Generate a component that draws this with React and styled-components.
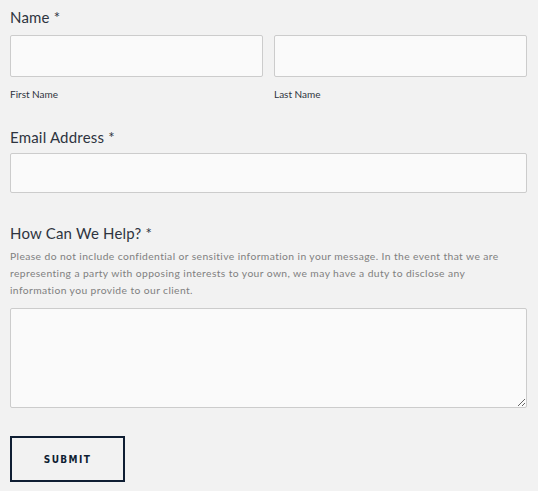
import styled, { createGlobalStyle } from 'styled-components';

const GlobalStyle = createGlobalStyle`
  html, body {
    margin: 0;
    background: #f2f2f2;
  }
  body {
    font-family: Lato, "Noto Sans", sans-serif;
  }
`;

const Form = styled.form`
  display: flex;
  flex-direction: column;
  padding: 7px 11px 0 10px;
`;

const Field = styled.div`
  display: flex;
  flex-direction: column;
  margin-bottom: ${(p) => p.$gap || '0px'};
`;

const Legend = styled.label`
  font-size: 15px;
  color: #2e3440;
  line-height: 20px;
  margin-bottom: ${(p) => p.$mb || '8px'};
  letter-spacing: 0.2px;
`;

const Row = styled.div`
  display: grid;
  grid-template-columns: 1fr 1fr;
  gap: 11px;
`;

const Sub = styled.div`
  display: flex;
  flex-direction: column;
`;

const Input = styled.input`
  box-sizing: border-box;
  width: 100%;
  height: ${(p) => p.$h || '42px'};
  background: #fafafa;
  border: 1px solid #cccccc;
  border-radius: 2px;
  font: inherit;
  outline: none;
`;

const SubLabel = styled.span`
  font-size: 10px;
  color: #2e3440;
  margin-top: 10px;
  line-height: 14px;
`;

const Help = styled.p`
  margin: 0 0 9px;
  max-width: 500px;
  font-size: 10.3px;
  line-height: 17px;
  color: #808080;
  letter-spacing: 0.4px;
`;

const TextArea = styled.textarea`
  box-sizing: border-box;
  width: 100%;
  height: 100px;
  background: #fafafa;
  border: 1px solid #cccccc;
  border-radius: 2px;
  font: inherit;
  display: block;
  outline: none;
`;

const Submit = styled.button`
  align-self: flex-start;
  width: 115px;
  height: 46px;
  background: transparent;
  border: 2px solid #0f1e33;
  color: #0f1e33;
  font-family: "DejaVu Sans Condensed", "DejaVu Sans", sans-serif;
  font-weight: bold;
  font-size: 10px;
  letter-spacing: 1.4px;
  cursor: pointer;
`;

export default function App() {
  return (
    <>
      <GlobalStyle />
      <Form onSubmit={(e) => e.preventDefault()}>
        <Field $gap="26px">
          <Legend>Name *</Legend>
          <Row>
            <Sub>
              <Input type="text" />
              <SubLabel>First Name</SubLabel>
            </Sub>
            <Sub>
              <Input type="text" />
              <SubLabel>Last Name</SubLabel>
            </Sub>
          </Row>
        </Field>
        <Field $gap="30px">
          <Legend $mb="6px">Email Address *</Legend>
          <Input type="email" $h="40px" />
        </Field>
        <Field $gap="28px">
          <Legend $mb="5px">How Can We Help? *</Legend>
          <Help>
            Please do not include confidential or sensitive information in your message. In the event that we are
            representing a party with opposing interests to your own, we may have a duty to disclose any
            information you provide to our client.
          </Help>
          <TextArea />
        </Field>
        <Submit type="submit">SUBMIT</Submit>
      </Form>
    </>
  );
}
